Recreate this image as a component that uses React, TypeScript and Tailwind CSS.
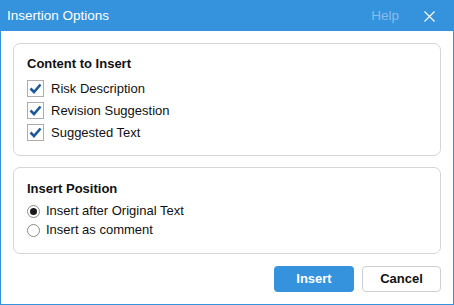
import { useState } from "react";

const CONTENT_ITEMS = ["Risk Description", "Revision Suggestion", "Suggested Text"];
const POSITIONS = ["Insert after Original Text", "Insert as comment"];

function CheckBox({ checked }: { checked: boolean }) {
  return (
    <span className="flex h-[17px] w-[17px] items-center justify-center border border-[#adadad] bg-white">
      {checked && (
        <svg width="13" height="11" viewBox="0 0 13 11">
          <path d="M1.5 5.5 L5 9 L11.5 1.5" fill="none" stroke="#1a5a9c" strokeWidth="2.6" />
        </svg>
      )}
    </span>
  );
}

function Radio({ checked }: { checked: boolean }) {
  return (
    <span className="flex h-[13px] w-[13px] items-center justify-center rounded-full border border-[#8a8a8a] bg-white">
      {checked && <span className="h-[7px] w-[7px] rounded-full bg-[#1a1a1a]" />}
    </span>
  );
}

export default function App() {
  const [checked, setChecked] = useState([true, true, true]);
  const [position, setPosition] = useState(0);

  return (
    <div
      className="flex h-[305px] w-[454px] flex-col border border-[#3592dd] bg-white text-[13px] text-[#111]"
      style={{ fontFamily: '"Liberation Sans", Arial, sans-serif' }}
    >
      {/* title bar */}
      <div className="flex h-[30px] shrink-0 items-center bg-[#3592dd] pl-[6px] pr-[18px] text-white">
        <span className="text-[13.5px]">Insertion Options</span>
        <span className="ml-auto text-[13.5px] text-[#88bdea]">Help</span>
        <svg className="ml-[25px]" width="11" height="11" viewBox="0 0 11 11">
          <path d="M0.5 0.5 L10.5 10.5 M10.5 0.5 L0.5 10.5" stroke="white" strokeWidth="1.1" />
        </svg>
      </div>

      <div className="flex flex-1 flex-col px-[12px] pt-[12px]">
        {/* content to insert */}
        <div className="h-[113px] rounded-[7px] border border-[#d6d6d6] px-[13px] pt-[11px]">
          <div className="text-[13px] font-bold leading-[18px]">Content to Insert</div>
          <div className="mt-[7px] flex flex-col gap-[5px]">
            {CONTENT_ITEMS.map((label, i) => (
              <label
                key={label}
                className="flex h-[17px] cursor-pointer items-center gap-[7px]"
                onClick={() => setChecked((c) => c.map((v, j) => (j === i ? !v : v)))}
              >
                <CheckBox checked={checked[i]} />
                <span className="leading-[17px]">{label}</span>
              </label>
            ))}
          </div>
        </div>

        {/* insert position */}
        <div className="mt-[11px] h-[87px] rounded-[7px] border border-[#d6d6d6] px-[13px] pt-[12px]">
          <div className="text-[13px] font-bold leading-[18px]">Insert Position</div>
          <div className="mt-[5px] flex flex-col gap-[3px]">
            {POSITIONS.map((label, i) => (
              <label
                key={label}
                className="flex h-[16px] cursor-pointer items-center gap-[6px]"
                onClick={() => setPosition(i)}
              >
                <Radio checked={position === i} />
                <span className="leading-[16px]">{label}</span>
              </label>
            ))}
          </div>
        </div>

        {/* buttons */}
        <div className="mt-[12px] flex justify-end gap-[8px]">
          <button className="h-[26px] w-[80px] rounded-[4px] bg-[#3592dd] text-[13px] font-bold text-white">
            Insert
          </button>
          <button className="h-[26px] w-[79px] rounded-[4px] border border-[#cfcfcf] bg-white text-[13px] font-bold text-[#111]">
            Cancel
          </button>
        </div>
      </div>
    </div>
  );
}
